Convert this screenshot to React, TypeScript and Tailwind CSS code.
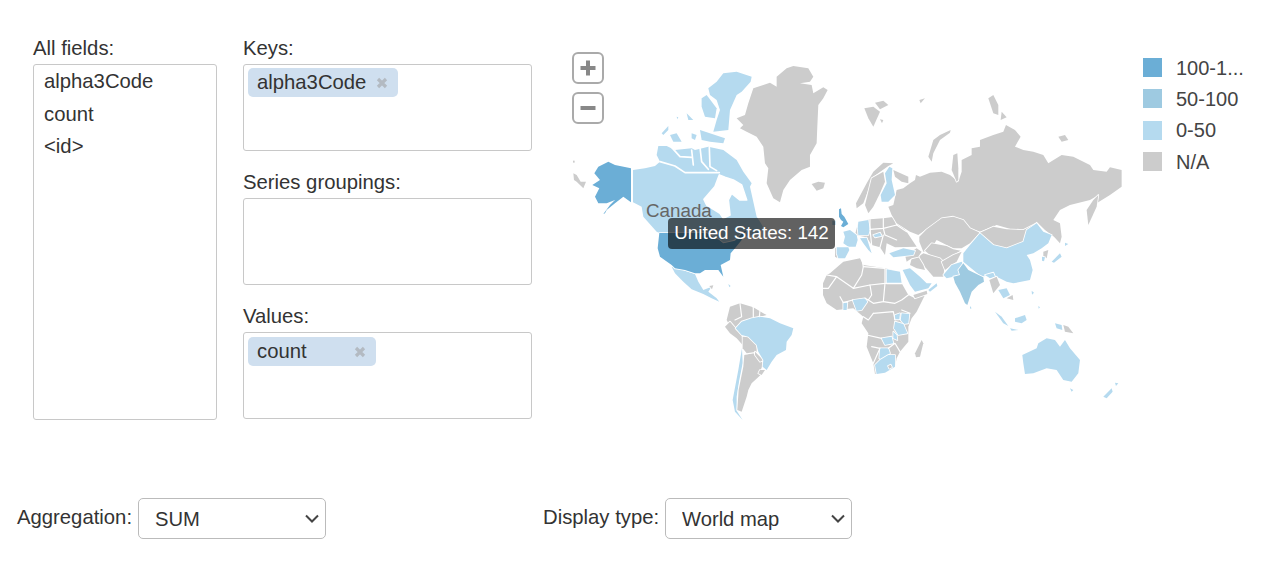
import React from "react";

const G = "#cccccc";
const L = "#b5daef";
const M = "#9ecae1";
const D = "#6baed6";
const W = "#ffffff";

type Shape = [string, string];

function Shapes({ t, items, lines = [], width = 3.5 }: { t: string; items: Shape[]; lines?: string[]; width?: number }) {
  return (
    <g transform={t} stroke="#ffffff" strokeWidth={5} strokeLinejoin="round" strokeLinecap="round" paintOrder="stroke">
      {items.map(([fill, points], i) => (
        <polygon key={i} fill={fill} points={points} />
      ))}
      {lines.map((points, i) => (
        <polyline key={i} fill="none" strokeWidth={width} points={points} />
      ))}
    </g>
  );
}

const northAmerica: Shape[] = [
  [G, "530,235 555,225 565,190 580,145 610,135 630,128 650,140 650,110 680,85 700,78 745,85 760,110 750,125 720,130 755,135 760,160 790,142 803,150 790,175 775,195 772,260 770,310 750,345 750,380 725,390 690,420 670,450 660,487 640,475 620,430 625,385 615,370 610,320 590,290 560,275 540,265 550,255"],
  [G, "755,432 775,425 795,428 790,445 770,452"],
  [G, "40,400 50,405 62,425 78,425 70,445 50,425 42,420"],
  [G, "39,362 44,362 44,368 39,368"],
  [L, "445,145 470,125 490,100 530,95 575,110 572,125 545,155 530,165 510,210 505,270 460,275 470,240 480,210 470,180 450,165"],
  [L, "425,175 440,165 470,205 465,235 435,230 425,200"],
  [L, "305,280 325,258 325,270 310,285"],
  [L, "330,285 350,280 365,305 340,305"],
  [L, "380,220 400,240 385,240"],
  [L, "395,280 410,285 405,300 395,295"],
  [L, "420,270 495,295 490,310 450,305 425,300"],
  [L, "350,230 355,232 352,238"],
  [L, "219,390 255,385 285,378 300,365 290,345 295,318 320,318 345,330 395,325 405,330 445,320 490,330 530,360 550,395 575,430 570,440 590,530 600,545 609,560 600,579 580,585 540,590 520,600 500,625 470,610 300,580 290,575 250,530 245,500 219,487"],
  [W, "478,405 465,440 432,478 440,495 480,520 490,535 510,525 505,480 515,460 540,480 560,480 545,435 520,420 495,412"],
];

const arcticChannels = [
  "300,365 345,378 375,398 430,398 478,398",
  "335,322 360,350 395,352",
  "395,330 400,375",
  "420,322 425,365 445,388",
  "448,322 450,380 470,392",
];

const northAmericaFront: Shape[] = [
  [D, "103,400 115,380 145,365 165,375 213,385 213,487 190,470 165,490 140,510 135,520 130,522 150,495 165,480 140,490 115,490 105,470 118,445 97,435 120,420"],
];

const usa: Shape[] = [
  [L, "335,140 375,152 405,162 415,185 430,210 455,200 445,215 470,235 478,245 455,235 430,222 395,208 370,185 345,160"],
  [D, "298,39 440,39 478,60 490,70 525,62 550,35 560,30 545,60 525,85 512,100 510,120 482,135 490,170 475,150 435,150 420,160 405,160 375,150 345,145 335,135 300,110 293,85"],
  [G, "448,198 460,196 456,208"],
  [L, "505,192 512,198 508,202"],
];

const southAmerica: Shape[] = [
  [G, "500,300 510,260 540,250 580,262 610,280 620,285 600,290 575,295 545,305 525,325 505,310"],
  [G, "495,320 510,305 527,325 545,345 548,375 530,355 510,340"],
  [L, "546,385 548,430 538,480 530,530 530,572 548,600 525,575 518,540 535,450"],
  [G, "553,405 580,400 610,430 603,448 605,462 575,490 565,510 560,530 545,575 532,570 536,510 550,440"],
  [G, "548,350 565,350 590,375 590,395 560,400 548,385"],
  [G, "585,395 610,420 600,425 585,405"],
  [G, "600,450 615,450 605,465 595,460"],
  [L, "527,325 545,305 575,295 600,290 630,295 660,310 700,325 695,345 680,365 678,390 650,405 635,425 620,450 608,440 610,420 595,395 590,375 565,350 545,345"],
];

const southAmericaLines = ["540,250 545,290 525,300", "580,262 580,290", "600,272 598,290"];

const russia: Shape[] = [
  [G, "200,450 220,445 240,430 255,420 258,405 270,410 300,398 335,395 360,405 385,425 395,395 395,360 425,345 425,325 450,320 450,300 490,285 520,275 528,255 555,270 572,290 555,320 580,330 610,335 640,345 655,370 695,345 730,350 780,375 790,390 830,395 840,382 875,390 875,440 840,465 800,490 806,465 780,480 720,495 690,510 670,540 690,550 695,590 690,610 672,590 645,570 620,545 600,565 560,572 500,555 450,575 420,565 400,540 370,530 335,535 265,585 240,575 200,550 185,525 175,500 190,495"],
  [G, "295,350 310,300 330,285 362,270 360,278 330,300 310,340 305,365"],
  [G, "370,345 382,340 385,385 385,420 380,425 365,390"],
  [G, "475,175 490,165 505,195 505,225 490,220"],
  [G, "515,215 530,232 512,240"],
  [G, "103,205 130,200 150,215 130,260 115,235"],
  [G, "135,188 160,182 175,195 150,208"],
  [G, "150,238 160,240 156,250"],
  [G, "268,180 285,175 272,190"],
  [G, "685,290 705,285 715,300 695,305"],
  [G, "770,510 790,480 805,465 800,500 775,555"],
  [G, "190,390 235,410 235,430 215,425 195,410"],
  [G, "78,490 110,430 130,395 160,368 190,370 175,378 130,410 100,490 80,505"],
  [G, "125,415 160,395 165,425 150,460 130,500 115,520 105,495"],
  [L, "178,380 187,385 185,420 195,465 175,485 155,485 152,465 170,430 165,400"],
];

const europe: Shape[] = [
  [G, "60,175 70,172 68,205 60,200"],
  [G, "120,135 130,95 165,88 205,85 240,80 275,125 305,170 240,172 215,160 210,195 195,172 170,165 155,142"],
  [L, "52,92 62,92 62,105 52,105"],
  [L, "85,125 105,120 125,135 128,150 122,170 100,170 85,160 90,140"],
  [L, "130,95 160,90 165,120 160,135 130,135 128,115"],
  [L, "65,172 100,172 103,180 90,205 70,205 65,190"],
  [L, "135,145 155,143 165,175 170,190 160,180 145,160"],
  [L, "175,135 195,128 200,138 180,142"],
  [D, "72,58 78,55 80,72 88,80 100,102 85,112 78,108 85,95 78,90 72,80"],
];

const europeLines = [
  "165,88 165,118 205,115 245,105",
  "205,85 205,115 210,135 245,150",
  "165,118 170,165",
  "205,135 195,172",
  "240,80 245,105 275,125",
];

const world: Shape[] = [
  [G, "268,50 290,28 335,-5 370,-10 400,0 420,25 450,38 420,70 395,85 370,85 350,75 320,60 300,90 280,95 268,65"],
  [G, "305,70 350,78 370,88 392,92 370,105 335,125 300,105 285,92"],
  [G, "265,110 280,100 330,115 345,130 340,170 310,170 280,135"],
  [G, "335,125 370,105 395,95 380,125 365,135 345,150"],
  [G, "240,135 245,115 265,110 280,135 285,150 260,145"],
  [G, "225,105 260,85 275,95 265,110 245,115 230,125"],
  [L, "178,100 220,85 255,92 250,105 190,112"],
  [G, "-21,190 -10,165 0,160 40,125 90,115 100,135 165,145 210,155 215,190 235,225 255,235 285,225 260,275 245,295 235,320 235,365 210,395 200,415 195,440 165,458 135,462 130,430 110,380 115,340 95,310 100,290 70,265 20,270 -10,250 -21,225"],
  [G, "255,400 275,360 280,370 270,410 258,412"],
  [L, "170,148 210,155 215,190 170,190"],
  [L, "68,240 105,235 112,245 95,270 80,272"],
  [L, "40,248 52,248 50,270 40,270"],
  [L, "215,280 238,282 235,310 222,312 212,300"],
  [L, "195,285 210,280 208,298 195,298"],
  [L, "195,305 220,312 232,340 205,345 192,325"],
  [L, "155,355 185,350 190,370 165,375"],
  [L, "190,335 200,345 202,360 190,355"],
  [L, "150,385 175,385 180,400 155,420 148,415"],
  [L, "135,435 150,420 175,405 195,405 195,440 165,458 140,462"],
  [G, "174,438 182,434 186,442 178,446"],
  [L, "218,150 240,145 270,170 290,190 305,190 295,205 255,215 240,195"],
  [G, "250,225 290,212 292,222 255,235"],
  [L, "295,210 320,190 322,198 300,215"],
  [G, "450,38 490,20 530,28 580,30 620,10 590,30 580,65 530,85 490,75"],
  [L, "400,100 420,75 450,40 490,75 530,85 580,65 590,30 620,10 640,35 665,45 655,70 635,85 610,100 590,105 600,120 608,150 600,180 550,190 530,185 500,170 480,165 455,170 430,150 400,125"],
  [L, "340,165 365,135 395,125 400,135 385,150 390,165 370,170 350,175"],
  [M, "400,130 415,150 460,172 462,185 445,195 425,215 412,255 405,250 390,215 375,188 370,170 390,165 385,150"],
  [L, "465,165 490,158 495,170 480,175"],
  [G, "478,180 500,170 510,195 490,220"],
  [L, "505,210 530,205 540,225 520,235"],
  [G, "530,235 548,225 550,240"],
  [G, "640,95 655,90 650,115 640,110"],
  [L, "636,110 645,112 642,124 636,122"],
  [L, "665,125 690,100 695,110 672,128"],
  [L, "705,68 715,72 705,78"],
  [L, "605,212 612,218 606,224"],
  [L, "420,258 425,265 420,266"],
  [L, "675,310 695,315 697,330 680,325"],
  [G, "700,315 715,320 730,340 705,335"],
  [L, "577,405 620,385 625,370 650,355 675,360 690,380 705,360 720,385 750,420 745,460 725,485 700,480 680,450 650,445 610,460 585,462 580,430"],
  [L, "720,505 730,510 725,515"],
  [L, "820,530 845,505 848,515 830,535"],
  [L, "855,488 865,490 858,498"],
  [L, "555,295 585,285 590,300 575,310 555,305"],
  [L, "495,275 515,290 535,318 520,310"],
  [L, "540,325 565,330 545,332"],
  [L, "625,258 630,262 626,266"],
];

const worldLines = [
  "95,115 100,140 95,165 70,205 20,170 -10,165",
  "20,170 -5,205 -21,205",
  "70,205 120,195 125,225 115,240 105,235",
  "100,140 165,145 165,190 120,195",
  "165,190 160,245 130,250 115,240",
  "165,190 215,190",
  "160,245 195,250 215,240 235,225",
  "130,280 115,300 100,290",
  "130,280 190,275 195,300",
  "215,270 240,280",
  "155,355 110,345",
  "130,430 150,385 125,380",
  "175,385 195,370 210,395",
  "30,230 40,248 68,240",
];

function ListBox({ children, className }: { children?: React.ReactNode; className: string }) {
  return <div className={`rounded-[3px] border border-[#c8c8c8] bg-white ${className}`}>{children}</div>;
}

function Chip({ text, width }: { text: string; width: string }) {
  return (
    <div className={`flex h-[29px] items-center justify-between rounded-[5px] bg-[#cfdfef] pl-[9px] pr-[10px] ${width}`}>
      <span className="leading-[29px]">{text}</span>
      <svg width="12" height="12" viewBox="0 0 12 12">
        <path d="M2 2l8 8M10 2l-8 8" stroke="#b3bac2" strokeWidth="3.2" />
      </svg>
    </div>
  );
}

function Field({ label, children }: { label: string; children?: React.ReactNode }) {
  return (
    <div className="flex flex-col">
      <div className="mb-[2px] h-[28px] leading-[28px]">{label}</div>
      <ListBox className="h-[87px] p-[3px] pl-[4px]">{children}</ListBox>
    </div>
  );
}

function ZoomButton({ children }: { children: React.ReactNode }) {
  return (
    <div className="flex h-[32px] w-[32px] items-center justify-center rounded-[6px] border-2 border-[#aaaaaa] bg-white">
      {children}
    </div>
  );
}

function Select({ value, width }: { value: string; width: string }) {
  return (
    <div className={`relative ml-[6px] h-[41px] ${width}`}>
      <select className="h-full w-full appearance-none rounded-[5px] border border-[#bbbbbb] bg-white pl-[16px] pt-[1px] text-[20.2px]">
        <option>{value}</option>
      </select>
      <svg className="pointer-events-none absolute right-[6px] top-[16px]" width="16" height="10" viewBox="0 0 16 10">
        <path d="M2 1.5l6 6 6-6" fill="none" stroke="#444444" strokeWidth="2" />
      </svg>
    </div>
  );
}

const legend: [string, string][] = [
  [D, "100-1..."],
  [M, "50-100"],
  [L, "0-50"],
  [G, "N/A"],
];

export default function App() {
  return (
    <div className="min-h-screen bg-white font-['Liberation_Sans',Arial,sans-serif] text-[20.3px] text-[#333333]">
      <div className="flex pl-[33px] pt-[34px]">
        <div className="w-[184px]">
          <div className="mb-[2px] h-[28px] leading-[28px]">All fields:</div>
          <ListBox className="h-[356px] pl-[10px]">
            <div className="h-[32px] leading-[32px]">alpha3Code</div>
            <div className="mt-[1px] h-[32px] leading-[32px]">count</div>
            <div className="h-[32px] leading-[32px]">&lt;id&gt;</div>
          </ListBox>
        </div>
        <div className="ml-[26px] flex w-[289px] flex-col gap-[17px]">
          <Field label="Keys:">
            <Chip text="alpha3Code" width="w-[150px]" />
          </Field>
          <Field label="Series groupings:" />
          <Field label="Values:">
            <div className="pt-[1px]">
              <Chip text="count" width="w-[128px]" />
            </div>
          </Field>
        </div>
        <div className="relative ml-[40px] mt-[16px] h-[370px] w-[550px]">
          <svg width="550" height="370" viewBox="572 50 550 370">
            <Shapes t="translate(560 40) scale(0.3333)" items={northAmerica} lines={arcticChannels} width={5} />
            <Shapes t="translate(560 40) scale(0.3333)" items={northAmericaFront} />
            <Shapes t="translate(560 220) scale(0.3333)" items={usa} />
            <Shapes t="translate(560 220) scale(0.3333)" items={southAmerica} lines={southAmericaLines} />
            <Shapes t="translate(815 190) scale(0.3333)" items={europe} lines={europeLines} />
            <Shapes t="translate(830 40) scale(0.3333)" items={russia} />
            <Shapes t="translate(830 220) scale(0.3333)" items={world} lines={worldLines} />
            <text x="646" y="217" fontSize="18.8" fill="#666666">Canada</text>
          </svg>
          <div className="absolute left-0 top-[2px] flex flex-col gap-[8px]">
            <ZoomButton>
              <svg width="18" height="18" viewBox="0 0 18 18">
                <path d="M9 1.5v15M1.5 9h15" stroke="#888888" strokeWidth="4" />
              </svg>
            </ZoomButton>
            <ZoomButton>
              <svg width="18" height="18" viewBox="0 0 18 18">
                <path d="M1.5 9h15" stroke="#888888" strokeWidth="4" />
              </svg>
            </ZoomButton>
          </div>
          <div className="absolute left-[96px] top-[168px] flex h-[31px] w-[167px] items-center justify-center whitespace-nowrap rounded-[4px] bg-[#0000009e] text-[18.8px] text-white">
            United States: 142
          </div>
        </div>
        <div className="ml-[21px] mt-[24px] flex flex-col gap-[12.4px]">
          {legend.map(([color, text]) => (
            <div key={text} className="flex h-[19px] items-center">
              <div className="h-[19px] w-[19px]" style={{ backgroundColor: color }} />
              <span className="ml-[14px] whitespace-nowrap text-[20px] text-[#444444]">{text}</span>
            </div>
          ))}
        </div>
      </div>
      <div className="ml-[17px] mt-[78px] flex items-center">
        <span className="mb-[2px] w-[115px] whitespace-nowrap">Aggregation:</span>
        <Select value="SUM" width="w-[188px]" />
        <span className="mb-[2px] ml-[217px] w-[116px] whitespace-nowrap">Display type:</span>
        <Select value="World map" width="w-[187px]" />
      </div>
    </div>
  );
}
